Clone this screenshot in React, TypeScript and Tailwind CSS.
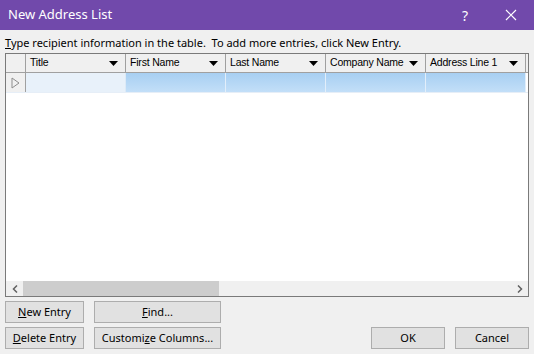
import React from "react";

const ui = { fontFamily: '"Noto Sans", "Open Sans", sans-serif' };
const grid = { fontFamily: '"Liberation Sans", Arial, sans-serif' };

function HeaderCell({ label }: { label: string }) {
  return (
    <div className="w-[100px] h-full flex items-center justify-between pl-[4px] pr-[7px] border-r border-[#a0a0a0] bg-[#f0f0f0] text-[10.5px] tracking-[-0.2px] text-black whitespace-nowrap overflow-hidden" style={grid}>
      <span>{label}</span>
      <svg width="9" height="5" viewBox="0 0 9 5" className="shrink-0"><polygon points="0,0 9,0 4.5,5" fill="#000" /></svg>
    </div>
  );
}

function Btn({ children, w }: { children: React.ReactNode; w: string }) {
  return (
    <div className={`${w} h-[22px] flex items-center justify-center bg-[#e1e1e1] border border-[#adadad] text-[11px] text-black whitespace-nowrap`} style={ui}>
      {children}
    </div>
  );
}

export default function App() {
  const cols = ["Title", "First Name", "Last Name", "Company Name", "Address Line 1"];
  return (
    <div className="w-[534px] h-[354px] bg-[#f0f0f0] flex flex-col overflow-hidden" style={ui}>
      <div className="h-[30px] bg-[#7149ab] flex items-center text-white shrink-0">
        <span className="pl-[8px] text-[13px] flex-1">New Address List</span>
        <span className="w-[46px] text-center text-[14px]">?</span>
        <span className="w-[46px] flex justify-center">
          <svg width="12" height="12" viewBox="0 0 12 12"><path d="M1 1 L11 11 M11 1 L1 11" stroke="#fff" strokeWidth="1.2" /></svg>
        </span>
      </div>
      <div className="h-[23px] pl-[5px] pt-[6px] text-[11px] leading-[14px] text-black whitespace-nowrap">
        <span><u>T</u>ype recipient information in the table.&nbsp; To add more entries, click New Entry.</span>
      </div>
      <div className="mx-[5px] h-[244px] border border-[#7a7a7a] bg-white flex flex-col">
        <div className="h-[19px] flex bg-[#f0f0f0] border-b border-[#a0a0a0]">
          <div className="w-[20px] h-full border-r border-[#a0a0a0] bg-[#f0f0f0]" />
          {cols.map((c) => (
            <HeaderCell key={c} label={c} />
          ))}
          <div className="flex-1 bg-[#f0f0f0]" />
        </div>
        <div className="h-[20px] flex border-b border-[#e6eef7]">
          <div className="w-[20px] h-full border-r border-[#a0a0a0] bg-[#f0f0f0] flex items-center justify-center">
            <svg width="9" height="12" viewBox="0 0 9 12"><polygon points="1,1 8,6 1,11" fill="none" stroke="#8d8d8d" /></svg>
          </div>
          <div className="w-[100px] h-full bg-[#e8f1fa] border-r border-[#dceaf7]" />
          {[0, 1, 2, 3].map((i) => (
            <div key={i} className="w-[100px] h-full bg-gradient-to-b from-[#a7cff2] to-[#c3dff8] border-r border-[#e2eefa]" />
          ))}
          <div className="flex-1 bg-white" />
        </div>
        <div className="flex-1 bg-white" />
        <div className="h-[15px] flex bg-[#f0f0f0]">
          <div className="w-[17px] h-full flex items-center justify-center">
            <svg width="6" height="8" viewBox="0 0 6 8"><path d="M5 0.5 L1.5 4 L5 7.5" fill="none" stroke="#606060" strokeWidth="1.5" /></svg>
          </div>
          <div className="w-[196px] h-full bg-[#cdcdcd]" />
          <div className="flex-1" />
          <div className="w-[17px] h-full flex items-center justify-center">
            <svg width="6" height="8" viewBox="0 0 6 8"><path d="M1 0.5 L4.5 4 L1 7.5" fill="none" stroke="#606060" strokeWidth="1.5" /></svg>
          </div>
        </div>
      </div>
      <div className="flex px-[5px] pt-[4px] gap-[10px]">
        <div className="flex flex-col gap-[4px]">
          <Btn w="w-[79px]"><span><u>N</u>ew Entry</span></Btn>
          <Btn w="w-[79px]"><span><u>D</u>elete Entry</span></Btn>
        </div>
        <div className="flex flex-col gap-[4px]">
          <Btn w="w-[127px]"><span><u>F</u>ind...</span></Btn>
          <Btn w="w-[127px]"><span>Customi<u>z</u>e Columns...</span></Btn>
        </div>
        <div className="flex-1 flex items-end justify-end gap-[10px]">
          <Btn w="w-[74px]"><span>OK</span></Btn>
          <Btn w="w-[74px]"><span>Cancel</span></Btn>
        </div>
      </div>
    </div>
  );
}
